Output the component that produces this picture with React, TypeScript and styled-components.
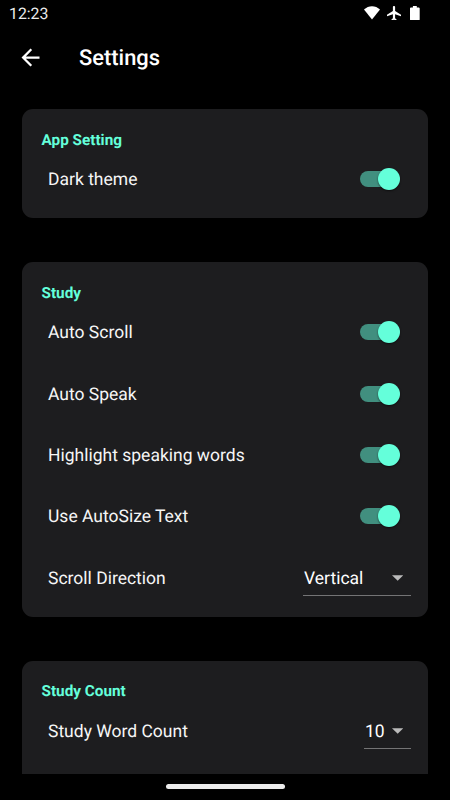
import React from "react";
import styled, { createGlobalStyle } from "styled-components";

const Global = createGlobalStyle`
  * { box-sizing: border-box; }
  body { margin: 0; background: #000; overflow: hidden; }
`;
const Screen = styled.main`
  width: 450px;
  height: 800px;
  background: #000;
  color: #fff;
  font-family: Roboto, sans-serif;
  text-rendering: geometricPrecision;
  display: flex;
  flex-direction: column;
  overflow: hidden;
`;
const StatusBar = styled.div`
  height: 27px;
  flex: none;
  display: flex;
  align-items: center;
  justify-content: space-between;
  padding: 0 30px 0 9px;
  font-size: 15.8px;
  color: #ececec;
`;
const StatusIcons = styled.div`
  display: flex;
  align-items: center;
  padding-bottom: 1px;
  svg { display: block; fill: #fff; }
`;
const WifiIcon = styled.svg`width: 16px; height: 14px; margin-right: 7px;`;
const PlaneIcon = styled.svg`width: 14px; height: 14.5px; margin-right: 9.5px;`;
const BatteryIcon = styled.svg`width: 9.7px; height: 14.5px;`;
const AppBar = styled.header`
  height: 61px;
  flex: none;
  display: flex;
  align-items: center;
  padding: 0 0 1px 17px;
  gap: 35px;
`;
const BackButton = styled.button`
  width: 27px;
  height: 27px;
  padding: 0;
  border: 0;
  background: none;
  svg { display: block; width: 27px; height: 27px; fill: #fff; }
`;
const Title = styled.h1`
  margin: 0;
  padding-top: 3px;
  font-size: 21.9px;
  font-weight: 500;
  line-height: 30px;
`;
const Content = styled.div`
  height: 686px;
  flex: none;
  padding: 21.4px 22px 0;
  display: flex;
  flex-direction: column;
  gap: 44px;
  overflow: hidden;
`;
const Card = styled.section`
  flex: none;
  background: #1d1d1f;
  border-radius: 11px;
  padding: 21.5px 17.5px 7.8px 19.5px;
`;
const Heading = styled.h2`
  margin: 0;
  color: #64ffda;
  font-size: 15.3px;
  font-weight: 700;
  line-height: 18.5px;
`;
const Row = styled.div`
  height: 61.3px;
  display: flex;
  align-items: center;
  justify-content: space-between;
  padding-left: 6.5px;
`;
const Label = styled.span`
  padding-top: 0.6px;
  font-size: 17.5px;
  line-height: 24px;
  color: #f6f6f6;
`;
const Track = styled.span`
  width: 37px;
  height: 16px;
  margin: 0 13.5px 1.4px 0;
  border-radius: 8px;
  background: #418f7f;
  display: flex;
  align-items: center;
  justify-content: flex-end;
`;
const Thumb = styled.i`
  flex: none;
  width: 22px;
  height: 22px;
  margin-right: -3px;
  border-radius: 50%;
  background: #64ffda;
  box-shadow: 0 1px 2px rgba(0, 0, 0, .55);
`;
const SelectBox = styled.span<{ $width: number }>`
  width: ${p => p.$width}px;
  height: 36px;
  border-bottom: 1px solid #747475;
  display: flex;
  align-items: center;
  justify-content: space-between;
  padding: 2px 7.5px 0 1px;
  font-size: 17.5px;
  svg { display: block; width: 11.4px; height: 6px; margin-bottom: 2px; fill: #bbb; }
`;
const Navigation = styled.footer`
  flex: 1;
  display: flex;
  align-items: center;
  justify-content: center;
`;
const HomeHandle = styled.div`
  width: 119px;
  height: 5px;
  margin-bottom: 1px;
  border-radius: 3px;
  background: #ececec;
`;

const Toggle = () => <Track role="switch" aria-checked="true"><Thumb /></Track>;

const Select = ({ value, width }: { value: string; width: number }) => (
  <SelectBox $width={width}>
    {value}
    <svg viewBox="0 0 10 5"><path d="M0 0h10L5 5z" /></svg>
  </SelectBox>
);

const studyToggles = ["Auto Scroll", "Auto Speak", "Highlight speaking words", "Use AutoSize Text"];

export default function App() {
  return (
    <Screen>
      <Global />
      <StatusBar>
        12:23
        <StatusIcons>
          <WifiIcon viewBox="0 0 16 14"><path d="M0 3.6C4.5-.9 11.5-.9 16 3.6L8 13.5z" /></WifiIcon>
          <PlaneIcon viewBox="2 2 19 20" preserveAspectRatio="none">
            <path d="M21 16v-2l-8-5V3.5C13 2.67 12.33 2 11.5 2S10 2.67 10 3.5V9l-8 5v2l8-2.5V19l-2 1.5V22l3.5-1 3.5 1v-1.5L13 19v-5.5z" />
          </PlaneIcon>
          <BatteryIcon viewBox="7 2 10 20" preserveAspectRatio="none">
            <path d="M15.67 4H14V2h-4v2H8.33C7.6 4 7 4.6 7 5.33v15.33C7 21.4 7.6 22 8.33 22h7.33c.74 0 1.34-.6 1.34-1.33V5.33C17 4.6 16.4 4 15.67 4z" />
          </BatteryIcon>
        </StatusIcons>
      </StatusBar>
      <AppBar>
        <BackButton aria-label="Back">
          <svg viewBox="0 0 24 24"><path d="M20 11H7.83l5.59-5.59L12 4l-8 8 8 8 1.41-1.41L7.83 13H20z" /></svg>
        </BackButton>
        <Title>Settings</Title>
      </AppBar>
      <Content>
        <Card>
          <Heading>App Setting</Heading>
          <Row><Label>Dark theme</Label><Toggle /></Row>
        </Card>
        <Card>
          <Heading>Study</Heading>
          {studyToggles.map(name => <Row key={name}><Label>{name}</Label><Toggle /></Row>)}
          <Row><Label>Scroll Direction</Label><Select value="Vertical" width={107.5} /></Row>
        </Card>
        <Card>
          <Heading>Study Count</Heading>
          <Row><Label>Study Word Count</Label><Select value="10" width={46.5} /></Row>
          <Row />
        </Card>
      </Content>
      <Navigation><HomeHandle /></Navigation>
    </Screen>
  );
}
